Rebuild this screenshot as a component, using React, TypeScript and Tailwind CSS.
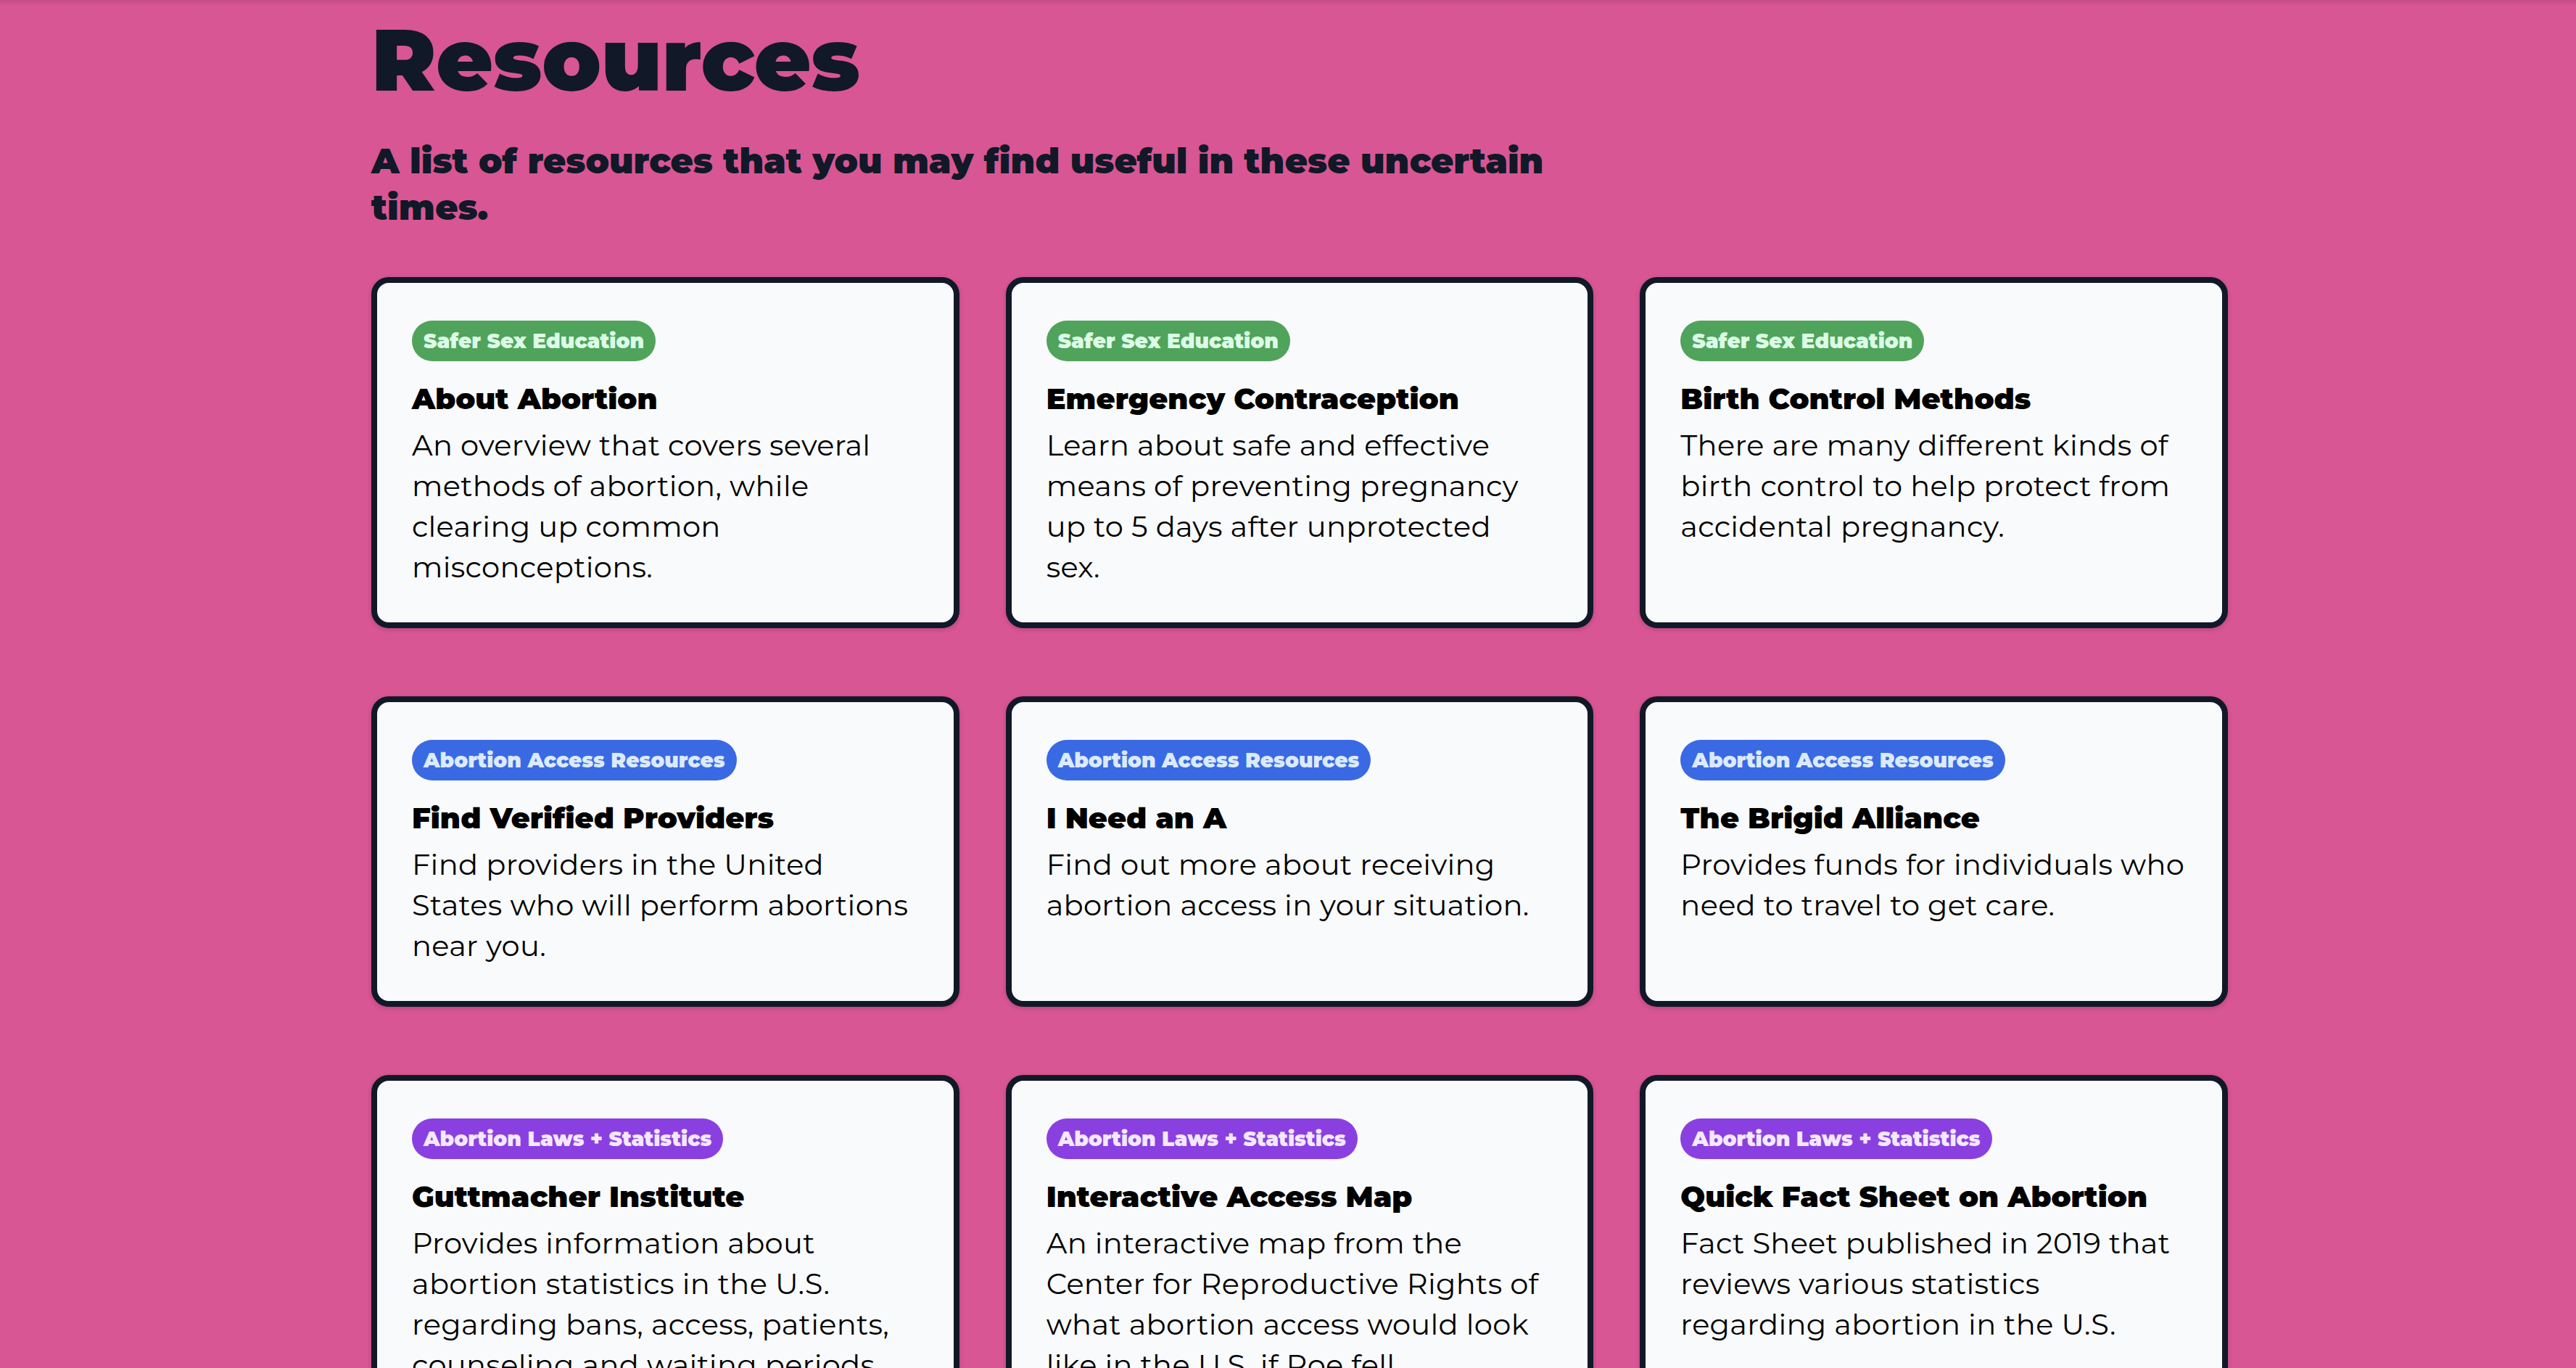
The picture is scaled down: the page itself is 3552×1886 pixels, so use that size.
import React from 'react';

type Category = 'safer' | 'access' | 'laws';

interface Resource {
  category: Category;
  title: string;
  description: string;
}

const categoryLabels: Record<Category, string> = {
  safer: 'Safer Sex Education',
  access: 'Abortion Access Resources',
  laws: 'Abortion Laws + Statistics',
};

const categoryStyles: Record<Category, string> = {
  safer: 'bg-[#50a35a] text-[#dcfce7]',
  access: 'bg-[#3a69e4] text-[#dbeafe]',
  laws: 'bg-[#8a40e0] text-[#f3e8ff]',
};

// line breaks kept as they fall in the design
const resources: Resource[] = [
  {
    category: 'safer',
    title: 'About Abortion',
    description: 'An overview that covers several\nmethods of abortion, while\nclearing up common\nmisconceptions.',
  },
  {
    category: 'safer',
    title: 'Emergency Contraception',
    description: 'Learn about safe and effective\nmeans of preventing pregnancy\nup to 5 days after unprotected\nsex.',
  },
  {
    category: 'safer',
    title: 'Birth Control Methods',
    description: 'There are many different kinds of\nbirth control to help protect from\naccidental pregnancy.',
  },
  {
    category: 'access',
    title: 'Find Verified Providers',
    description: 'Find providers in the United\nStates who will perform abortions\nnear you.',
  },
  {
    category: 'access',
    title: 'I Need an A',
    description: 'Find out more about receiving\nabortion access in your situation.',
  },
  {
    category: 'access',
    title: 'The Brigid Alliance',
    description: 'Provides funds for individuals who\nneed to travel to get care.',
  },
  {
    category: 'laws',
    title: 'Guttmacher Institute',
    description:
      'Provides information about\nabortion statistics in the U.S.\nregarding bans, access, patients,\ncounseling and waiting periods.',
  },
  {
    category: 'laws',
    title: 'Interactive Access Map',
    description:
      'An interactive map from the\nCenter for Reproductive Rights of\nwhat abortion access would look\nlike in the U.S. if Roe fell.',
  },
  {
    category: 'laws',
    title: 'Quick Fact Sheet on Abortion',
    description: 'Fact Sheet published in 2019 that\nreviews various statistics\nregarding abortion in the U.S.',
  },
];

function ResourceCard({ resource }: { resource: Resource }) {
  return (
    <div className="rounded-[24px] border-[8px] border-[#111827] bg-[#f9fafb] px-[48px] pt-[52px] pb-[48px] shadow-[0_2px_6px_rgba(0,0,0,0.18)]">
      <span
        className={`flex w-fit rounded-full px-[16px] py-[8px] text-[28px] leading-[40px] font-black ${categoryStyles[resource.category]}`}
      >
        {categoryLabels[resource.category]}
      </span>
      <h3 className="mt-[24px] text-[40px] leading-[56px] font-black text-black">{resource.title}</h3>
      <p className="mt-[8px] whitespace-pre-line text-[40px] leading-[56px] tracking-[0.3px] text-black">
        {resource.description}
      </p>
    </div>
  );
}

export default function App() {
  return (
    <div className="min-h-[1886px] overflow-hidden bg-[#d85693] font-['Montserrat','Inter','Noto_Sans',sans-serif]">
      <div className="h-[8px] bg-gradient-to-b from-black/10 to-transparent" />
      <main className="ml-[512px] w-[2560px] pt-[14px]">
        <h1 className="text-[120px] leading-none font-black text-[#111827]">Resources</h1>
        <h2 className="mt-[48px] max-w-[1760px] text-[48px] leading-[64px] font-black text-[#111827]">
          A list of resources that you may find useful in these uncertain times.
        </h2>
        <div className="mt-[64px] grid grid-cols-3 gap-x-[64px] gap-y-[94px]">
          {resources.map((r) => (
            <ResourceCard key={r.title} resource={r} />
          ))}
        </div>
      </main>
    </div>
  );
}
